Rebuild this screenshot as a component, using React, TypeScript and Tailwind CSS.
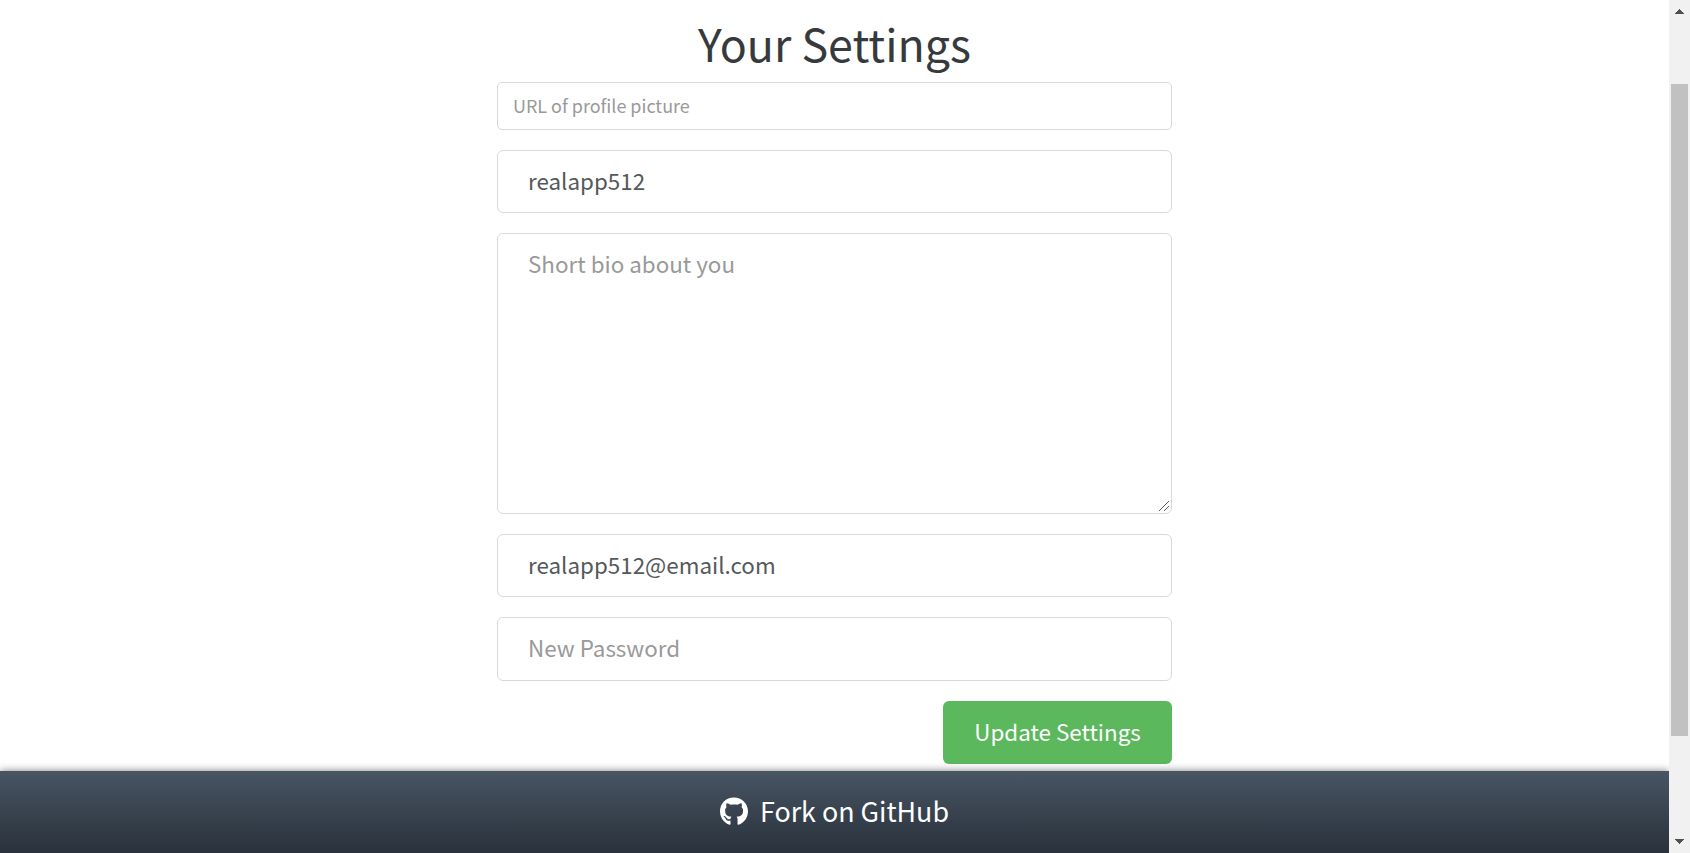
import React from "react";
import { FaGithub } from "react-icons/fa";

const field =
  "block w-full border border-[#d9d9d9] bg-white text-[#55595c] placeholder:text-[#999] placeholder:opacity-100 outline-none";
const large = "rounded-md px-[30px] text-[22.4px]";

function ScrollBar() {
  return (
    <div className="flex h-full w-[21px] shrink-0 flex-col items-center bg-[#f1f1f1]">
      <svg className="h-[84px] w-[21px] shrink-0" viewBox="0 0 21 84" shapeRendering="crispEdges">
        <path d="M6 14 L10.5 9 L15 14 Z" fill="#505050" />
      </svg>
      <div className="h-[652px] w-[17px] shrink-0 bg-[#c1c1c1]" />
      <svg className="h-[117px] w-[21px] shrink-0" viewBox="0 0 21 117" shapeRendering="crispEdges">
        <path d="M6 103 L10.5 108 L15 103 Z" fill="#505050" />
      </svg>
    </div>
  );
}

export default function App() {
  return (
    <div className="flex h-[853px] w-full overflow-hidden bg-white font-['Noto_Sans_CJK_SC',sans-serif]">
      <div className="flex min-w-0 flex-1 flex-col">
        <main className="mx-auto flex h-[771px] w-[675px] shrink-0 flex-col">
          <h1 className="h-[82px] shrink-0 pt-[15px] text-center text-[44.75px] leading-[55px] text-[#373a3c]">
            Your Settings
          </h1>
          <form className="flex flex-col gap-5" onSubmit={(e) => e.preventDefault()}>
            <input className={`${field} h-12 rounded-[5px] px-[15px] pb-0.5 text-[17.95px]`} placeholder="URL of profile picture" />
            <input className={`${field} ${large} h-[63px] pb-1`} defaultValue="realapp512" />
            <div className="relative h-[281px]">
              <textarea
                className={`${field} ${large} h-full resize-none py-3.5 leading-[31px]`}
                placeholder="Short bio about you"
              />
              <svg className="absolute right-[3px] bottom-[3px] h-2.5 w-2.5" viewBox="0 0 10 10" shapeRendering="crispEdges" fill="#5a5a5a">
                {[0, 1, 2, 3, 4, 5, 6, 7, 8, 9].map((i) => (
                  <rect key={i} x={i} y={9 - i} width="1" height="1" />
                ))}
                {[5, 6, 7, 8, 9].map((i) => (
                  <rect key={i} x={i} y={14 - i} width="1" height="1" />
                ))}
              </svg>
            </div>
            <input className={`${field} ${large} h-[63px] pb-1`} defaultValue="realapp512@email.com" />
            <input className={`${field} ${large} h-16 pb-1`} type="password" placeholder="New Password" />
            <button className="h-[63px] w-[229px] self-end rounded-md bg-[#5cb85c] pb-0.5 text-[22.4px] text-white">
              Update Settings
            </button>
          </form>
        </main>
        <footer className="relative flex h-[82px] shrink-0 items-center justify-center gap-3 bg-linear-to-b from-[#485563] to-[#29323c] pb-0.5 text-white shadow-[0_0_8px_rgba(0,0,0,0.5)]">
          <FaGithub className="h-[29px] w-7" />
          <span className="text-[26.85px] leading-[38px]">Fork on GitHub</span>
        </footer>
      </div>
      <div className="relative h-full shrink-0">
        <ScrollBar />
      </div>
    </div>
  );
}
